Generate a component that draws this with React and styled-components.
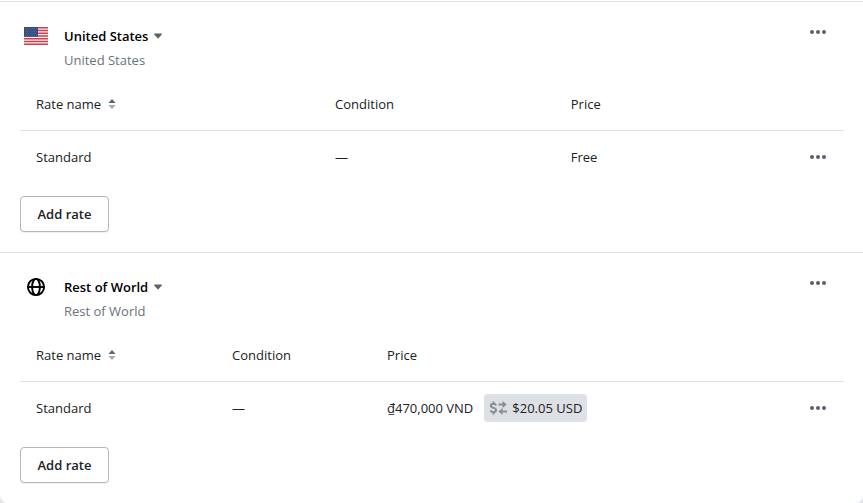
import { useState } from 'react';
import styled, { createGlobalStyle } from 'styled-components';

const GlobalStyle = createGlobalStyle`
  * {
    box-sizing: border-box;
  }

  body {
    margin: 0;
    background: #e4e7ea;
    color: #202223;
    font-family: "Open Sans", "Noto Sans", sans-serif;
    font-size: 13px;
    line-height: 20px;
  }

  button {
    font: inherit;
    color: inherit;
    cursor: pointer;
  }
`

const Card = styled.main`
  padding-top: 1px;
  background: #fff;
  border-radius: 0 0 8px 8px;
`

const Zone = styled.section`
  border-top: 1px solid #dfe3e4;
  padding: 20px 19px 20px 20px;
`

const ZoneHeader = styled.header`
  display: flex;
  align-items: flex-start;
  padding: 0 8px 6px 4px;
`

const ZoneIcon = styled.div`
  display: flex;
  align-items: center;
  justify-content: center;
  width: 24px;
  height: 28px;
  margin-right: 16px;
`

const ZoneTitles = styled.div`
  flex: 1;
  padding-top: 2px;
  line-height: 24px;
`

const ZoneName = styled.h2`
  margin: 0;
  font-size: 13px;
  line-height: 24px;
`

const NameButton = styled.button`
  display: flex;
  align-items: center;
  gap: 6px;
  padding: 0;
  border: 0;
  background: none;
  color: #000;
  font-weight: 600;
`

const ZoneRegion = styled.p`
  margin: 0;
  color: #6a737d;
`

const MoreButton = styled.button`
  display: inline-flex;
  align-items: center;
  justify-content: center;
  flex: none;
  width: 36px;
  height: 20px;
  padding: 0;
  border: 0;
  border-radius: 4px;
  background: none;
  color: #5c5f6b;
  vertical-align: top;

  &:hover {
    background: #f6f6f7;
  }
`

const RateTable = styled.table`
  width: 100%;
  table-layout: fixed;
  border-collapse: separate;
  border-spacing: 0;
`

const HeadCell = styled.th`
  width: ${(props) => props.$width || 'auto'};
  padding: 16px;
  border-bottom: 1px solid #dfe1e3;
  font-weight: 400;
  text-align: left;
`

const Cell = styled.td`
  height: 52px;
  padding: ${(props) => (props.$actions ? '0 8px' : '0 16px')};
  text-align: ${(props) => (props.$actions ? 'right' : 'left')};
`

const SortButton = styled.button`
  display: flex;
  align-items: center;
  gap: 7px;
  padding: 0;
  border: 0;
  background: none;
`

const Price = styled.div`
  display: flex;
  align-items: center;
  gap: 11px;
  white-space: nowrap;
`

const Converted = styled.span`
  display: inline-flex;
  align-items: center;
  gap: 5px;
  height: 28px;
  padding: 0 5px;
  border-radius: 4px;
  background: #dde0e4;
`

const AddButton = styled.button`
  display: block;
  min-width: 89px;
  height: 36px;
  margin-top: 13px;
  padding: 0 16px;
  border: 1px solid #b2b7be;
  border-radius: 4px;
  background: #fff;
  box-shadow: 0 1px 0 rgba(0, 0, 0, 0.05);
  font-weight: 600;

  &:hover {
    background: #f6f6f7;
  }
`

const FlagIcon = () => (
  <svg width="24" height="18" viewBox="0 0 24 18" aria-hidden="true">
    <path fill="#f4f0f2" d="M0 0h24v18H0z" />
    <path
      stroke="#c9444f"
      strokeWidth="1.38"
      d="M0 .7h24M0 3.46h24M0 6.23h24M0 9h24M0 11.77h24M0 14.54h24M0 17.3h24"
    />
    <path fill="#354a7c" d="M0 0h14v9.7H0z" />
    <path
      stroke="#8492b5"
      strokeWidth=".7"
      strokeDasharray=".8 1.5"
      d="M1 1.4h12.5M2.1 3.1h11M1 4.8h12.5M2.1 6.5h11M1 8.2h12.5"
    />
  </svg>
)

const GlobeIcon = () => (
  <svg width="20" height="20" viewBox="0 0 20 20" fill="none" stroke="#000" strokeWidth="1.9" aria-hidden="true">
    <circle cx="10" cy="10" r="8.1" />
    <ellipse cx="10" cy="10" rx="3.9" ry="8.1" />
    <path d="M2 10h16" />
  </svg>
)

const CaretIcon = () => (
  <svg width="8" height="6" viewBox="0 0 8 6" aria-hidden="true">
    <path fill="#5c6268" d="M.6.4h6.8c.5 0 .8.6.4 1L4.4 5.2a.5.5 0 0 1-.8 0L.2 1.4C-.2 1 .1.4.6.4z" />
  </svg>
)

const SortIcon = () => (
  <svg width="8" height="10" viewBox="0 0 8 10" aria-hidden="true">
    <path fill="#5f656c" d="M4 0l3.6 4H.4z" />
    <path fill="#a5a9ae" d="M4 10l3.6-4H.4z" />
  </svg>
)

const DotsIcon = () => (
  <svg width="16" height="4" viewBox="0 0 16 4" fill="currentColor" aria-hidden="true">
    <circle cx="2" cy="2" r="2" />
    <circle cx="8" cy="2" r="2" />
    <circle cx="14" cy="2" r="2" />
  </svg>
)

const ConvertIcon = () => (
  <svg width="18" height="16" viewBox="0 0 18 16" fill="none" stroke="#878e96" strokeWidth="2" aria-hidden="true">
    <path d="M7 5.5C6.6 4.4 5.7 3.8 4.4 3.8 2.9 3.8 1.9 4.6 1.9 5.800c0 2.700 5.200 1.500 5.200 4.300 0 1.300-1.100 2.100-2.700 2.100-1.400 0-2.400-.6-2.800-1.800M4.500 1.600v2.400M4.500 12v2.400" />
    <path d="M9.500 4.500H14M18 11.500h-4.500" />
    <path fill="#878e96" stroke="none" d="M13.600 1l4.200 3.500-4.200 3.500zM13.600 8l-4.200 3.500 4.200 3.500z" />
  </svg>
)

const zones = [
  {
    id: 'us',
    name: 'United States',
    icon: <FlagIcon />,
    columns: ['36.3%', '28.6%'],
    rate: { name: 'Standard', condition: '—', price: 'Free' },
  },
  {
    id: 'world',
    name: 'Rest of World',
    icon: <GlobeIcon />,
    columns: ['23.8%', '18.8%'],
    rate: { name: 'Standard', condition: '—', price: '₫470,000 VND', converted: '$20.05 USD' },
  },
]

const ShippingZone = ({ zone }) => {
  const [sort, setSort] = useState('ascending')
  const { rate } = zone

  return (
    <Zone>
      <ZoneHeader>
        <ZoneIcon>{zone.icon}</ZoneIcon>
        <ZoneTitles>
          <ZoneName>
            <NameButton type="button">
              {zone.name}
              <CaretIcon />
            </NameButton>
          </ZoneName>
          <ZoneRegion>{zone.name}</ZoneRegion>
        </ZoneTitles>
        <MoreButton type="button" aria-label="Zone actions">
          <DotsIcon />
        </MoreButton>
      </ZoneHeader>

      <RateTable>
        <thead>
          <tr>
            <HeadCell scope="col" $width={zone.columns[0]} aria-sort={sort}>
              <SortButton
                type="button"
                onClick={() => setSort(sort === 'ascending' ? 'descending' : 'ascending')}
              >
                Rate name
                <SortIcon />
              </SortButton>
            </HeadCell>
            <HeadCell scope="col" $width={zone.columns[1]}>Condition</HeadCell>
            <HeadCell scope="col">Price</HeadCell>
            <HeadCell scope="col" $width="64px" aria-label="Actions" />
          </tr>
        </thead>
        <tbody>
          <tr>
            <Cell>{rate.name}</Cell>
            <Cell>{rate.condition}</Cell>
            <Cell>
              <Price>
                {rate.price}
                {rate.converted && (
                  <Converted>
                    <ConvertIcon />
                    {rate.converted}
                  </Converted>
                )}
              </Price>
            </Cell>
            <Cell $actions>
              <MoreButton type="button" aria-label="Rate actions">
                <DotsIcon />
              </MoreButton>
            </Cell>
          </tr>
        </tbody>
      </RateTable>

      <AddButton type="button">Add rate</AddButton>
    </Zone>
  )
}

const App = () => (
  <>
    <GlobalStyle />
    <Card>
      {zones.map((zone) => (
        <ShippingZone key={zone.id} zone={zone} />
      ))}
    </Card>
  </>
)

export default App
